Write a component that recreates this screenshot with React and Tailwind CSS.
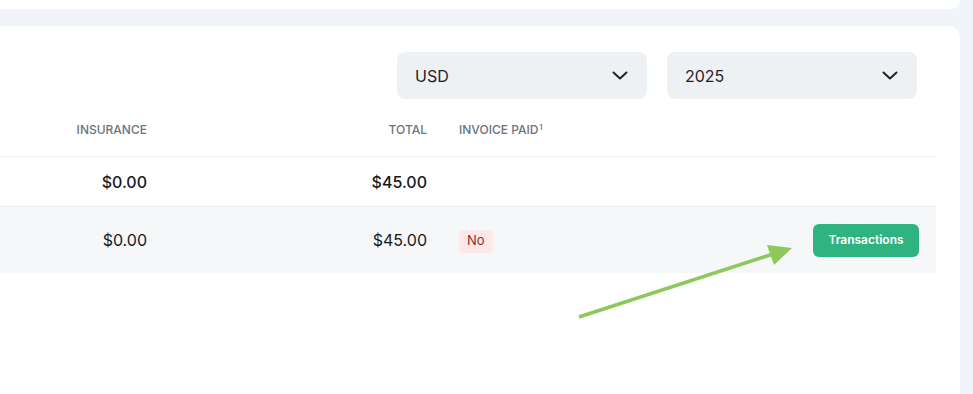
import React from "react";

const Chevron = () => (
  <svg width="16" height="9" viewBox="0 0 16 9" fill="none">
    <path d="M1.5 1.5 8 7.5l6.5-6" stroke="#1f2328" strokeWidth="2" strokeLinecap="round" strokeLinejoin="round" />
  </svg>
);

const Select = ({ value }) => (
  <div className="w-[250px] h-[47px] bg-[#eef1f3] rounded-lg flex items-center justify-between pl-[18px] pr-[19px] text-base text-[#1f2328]">
    <span>{value}</span>
    <Chevron />
  </div>
);

const Arrow = () => (
  <svg className="absolute inset-0 pointer-events-none" width="973" height="394">
    <line x1="579" y1="317" x2="773" y2="254" stroke="#8cc85a" strokeWidth="3.5" />
    <polygon points="792,248 767,245 774,265" fill="#8cc85a" />
  </svg>
);

export default function App() {
  return (
    <div
      className="relative h-[394px] w-full bg-[#f1f5f9] flex flex-col gap-[17px] pr-[13px] overflow-hidden"
      style={{ fontFamily: "Inter, 'Noto Sans', sans-serif" }}
    >
      <div className="h-[9px] bg-white rounded-br-xl" />

      <div className="flex-1 bg-white rounded-tr-xl pt-[26px]">
        <div className="flex justify-end gap-5 pr-[43px]">
          <Select value="USD" />
          <Select value="2025" />
        </div>

        <div className="mt-[5px] mr-[24px]">
          <div className="flex items-center h-[53px] border-b border-[#eceef0] text-xs font-medium uppercase text-[#6b7280]">
            <div className="w-[163px] pr-4 text-right">Insurance</div>
            <div className="w-[280px] pr-4 text-right">Total</div>
            <div className="flex-1 pl-4">
              Invoice Paid<sup className="text-[8px] ml-px">1</sup>
            </div>
          </div>

          <div className="flex items-center h-[50px] border-b border-[#eceef0] text-base font-medium text-[#16191d]">
            <div className="w-[163px] pr-4 text-right">$0.00</div>
            <div className="w-[280px] pr-4 text-right">$45.00</div>
            <div className="flex-1" />
          </div>

          <div className="flex items-center h-[66px] bg-[#f6f7f9] text-base text-[#16191d]">
            <div className="w-[163px] pr-4 text-right">$0.00</div>
            <div className="w-[280px] pr-4 text-right">$45.00</div>
            <div className="flex-1 pl-4">
              <span className="inline-flex items-center h-[23px] px-2 rounded bg-[#fde8e8] text-[13px] text-[#8f2a2a]">
                No
              </span>
            </div>
            <div className="pr-[17px]">
              <button className="w-[106px] h-[33px] rounded-md bg-[#2fb380] text-white text-xs font-semibold">
                Transactions
              </button>
            </div>
          </div>
        </div>
      </div>

      <Arrow />
    </div>
  );
}
